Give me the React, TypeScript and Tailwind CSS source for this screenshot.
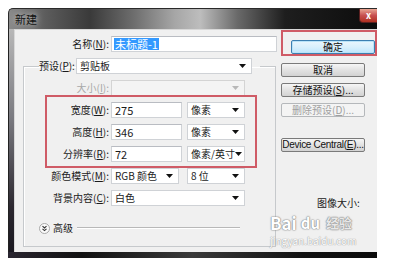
import React from 'react';

const font = "font-['Noto_Sans_CJK_SC','Noto_Sans',sans-serif]";

function Arrow({ disabled = false }: { disabled?: boolean }) {
  return (
    <svg width="7" height="4" viewBox="0 0 7 4" className="shrink-0">
      <path d="M0 0h7L3.5 4z" fill={disabled ? '#b8b8b8' : '#111'} />
    </svg>
  );
}

function Select({ value, w, disabled = false }: { value: string; w: string; disabled?: boolean }) {
  return (
    <div
      className={`${w} h-[16px] flex items-center justify-between pl-[3px] pr-[5px] border ${
        disabled ? 'bg-[#f4f4f4] border-[#d4d4d4] text-[#9a9a9a]' : 'bg-white border-[#cfd2d6] text-[#1a1a1a]'
      }`}
    >
      <span className="leading-none">{value}</span>
      <Arrow disabled={disabled} />
    </div>
  );
}

function Input({ value, w }: { value: string; w: string }) {
  return (
    <div className={`${w} h-[16px] flex items-center pl-[3px] bg-white border border-[#cfd2d6] border-t-[#b9bcc2]`}>
      <span className="leading-none text-[11px] text-[#1a1a1a]">{value}</span>
    </div>
  );
}

function Row({ label, labelW, children, disabled = false }: { label: React.ReactNode; labelW: string; children: React.ReactNode; disabled?: boolean }) {
  return (
    <div className="flex items-center h-[16px]">
      <div className={`${labelW} text-right pr-[2px] leading-none ${disabled ? 'text-[#a8a8a8]' : 'text-[#1a1a1a]'}`}>{label}</div>
      {children}
    </div>
  );
}

function Btn({ children, def = false, disabled = false, mt }: { children: React.ReactNode; def?: boolean; disabled?: boolean; mt?: string }) {
  let cls = 'border-[#7a7a7a] bg-[linear-gradient(#f6f6f6,#e2e2e2_50%,#d2d2d2)] text-[#111]';
  if (def) cls = 'border-[#3c7fb1] bg-[linear-gradient(#eaf6fd,#d9f0fc_50%,#bee6fd)] text-[#111] shadow-[inset_0_0_0_1px_#b9e3f8]';
  if (disabled) cls = 'border-[#b5b8bb] bg-[#f4f4f4] text-[#a0a0a0]';
  return (
    <div className={`${mt ?? ''} w-[84px] h-[14px] flex items-center justify-center rounded-[2px] border leading-none ${cls}`}>
      {children}
    </div>
  );
}

const U = ({ c }: { c: string }) => <span className="underline underline-offset-1">{c}</span>;

export default function App() {
  return (
    <div className={`w-[403px] h-[275px] bg-white overflow-hidden text-[10px] whitespace-nowrap ${font}`}>
      <div className="ml-[8px] mt-[8px] w-[369px] h-[250px] flex flex-col">
        {/* title bar */}
        <div className="h-[21px] flex items-center justify-between bg-[linear-gradient(90deg,#8a8a8a_0%,#5c5c5c_10%,#3a3a3a_22%,#6e6e6e_34%,#a6a6a6_45%,#bdbdbd_52%,#6a6a6a_62%,#1e1e1e_75%,#0c0c0c_100%)] rounded-tl-[5px] border-t border-l border-[#2a2a2a]">
          <span className="ml-[6px] text-[11px] text-[#111] [text-shadow:0_0_6px_#ddd]">新建</span>
          <div className="self-start w-[18px] h-[14px] rounded-bl-[4px] bg-[linear-gradient(#e8a592,#c75050_50%,#b03020)] border border-[#5a2020] border-t-0 border-r-0 flex items-center justify-center text-white text-[9px] font-bold leading-none">
            x
          </div>
        </div>

        <div className="flex flex-1">
          {/* left frame */}
          <div className="w-[7px] bg-[linear-gradient(#b8b8b8,#7a7a80_40%,#2c2830_80%,#1a1820)] border-l border-[#222]" />

          {/* client */}
          <div className="relative flex-1 bg-[#f0f0f0] flex border-l border-t border-[#d8d8d8]">
            {/* left column */}
            <div className="w-[266px] flex flex-col">
              <div className="mt-[6px]">
                <Row label={<>名称(<U c="N" />):</>} labelW="w-[96px]">
                  <div className="w-[166px] h-[16px] flex items-center pl-[2px] bg-white border border-[#cfd2d6] border-t-[#b9bcc2]">
                    <span className="bg-[#3399ff] text-white px-[1px] leading-[12px] text-[11px]">未标题-1</span>
                  </div>
                </Row>
              </div>

              <fieldset className="mt-[6px] ml-[8px] w-[253px] h-[189px] border border-[#c6c9cc] shadow-[inset_1px_1px_0_#fff]">
                <legend className="ml-[15px] pr-[8px]">
                  <div className="flex items-center">
                    <span className="pr-[1px] leading-none text-[#1a1a1a]">预设(<U c="P" />):</span>
                    <Select value="剪贴板" w="w-[176px]" />
                  </div>
                </legend>

                <div className="mt-[6px] flex flex-col">
                  <Row label={<>大小(<U c="I" />):</>} labelW="w-[87px]" disabled>
                    <Select value="" w="w-[134px]" disabled />
                  </Row>

                  <div className="-mt-[1px] ml-[21px] w-[212px] border-2 border-[#cf5b66] pt-[5px] pb-[4px] flex flex-col gap-[6px]">
                    <Row label={<>宽度(<U c="W" />):</>} labelW="w-[64px]">
                      <Input value="275" w="w-[71px]" />
                      <div className="w-[5px]" />
                      <Select value="像素" w="w-[58px]" />
                    </Row>
                    <Row label={<>高度(<U c="H" />):</>} labelW="w-[64px]">
                      <Input value="346" w="w-[71px]" />
                      <div className="w-[5px]" />
                      <Select value="像素" w="w-[58px]" />
                    </Row>
                    <Row label={<>分辨率(<U c="R" />):</>} labelW="w-[64px]">
                      <Input value="72" w="w-[71px]" />
                      <div className="w-[5px]" />
                      <Select value="像素/英寸" w="w-[58px]" />
                    </Row>
                  </div>

                  <Row label={<>颜色模式(<U c="M" />):</>} labelW="w-[87px]">
                    <Select value="RGB 颜色" w="w-[68px]" />
                    <div className="w-[8px]" />
                    <Select value="8 位" w="w-[58px]" />
                  </Row>
                  <div className="mt-[6px]">
                    <Row label={<>背景内容(<U c="C" />):</>} labelW="w-[87px]">
                      <Select value="白色" w="w-[134px]" />
                    </Row>
                  </div>

                  <div className="mt-[15px] ml-[15px] h-[14px] flex items-center">
                    <svg width="11" height="11" viewBox="0 0 11 11">
                      <circle cx="5.5" cy="5.5" r="5" fill="#fafafa" stroke="#a8a8a8" />
                      <path d="M3.5 3.2 5.5 5 7.5 3.2M3.5 5.8 5.5 7.6 7.5 5.8" fill="none" stroke="#333" strokeWidth="1.1" />
                    </svg>
                    <span className="ml-[3px] leading-none text-[#1a1a1a]">高级</span>
                    <div className="ml-[4px] w-[163px] h-[2px] border-t border-[#b8b8b8] border-b-white border-b" />
                  </div>
                </div>
              </fieldset>
            </div>

            {/* right column */}
            <div className="w-[96px] flex flex-col">
              <div className="w-[96px] h-[26px] border-2 border-[#cf5b66] pl-[8px] pt-[8px]">
                <Btn def>确定</Btn>
              </div>
              <Btn mt="mt-[7px]">取消</Btn>
              <Btn mt="mt-[6px]">存储预设(<U c="S" />)...</Btn>
              <Btn mt="mt-[6px]" disabled>删除预设(<U c="D" />)...</Btn>
              <Btn mt="mt-[21px]">
                <span className="font-['Liberation_Sans',sans-serif] tracking-[-0.3px]">Device Central(<U c="E" />)...</span>
              </Btn>
              <div className="mt-[46px] ml-[36px] leading-none text-[#1a1a1a]">图像大小:</div>
            </div>

            {/* watermark overlay */}
            <div className="absolute left-[255px] top-[184px] flex flex-col items-start pointer-events-none">
              <div className="flex items-end text-[17px] font-bold leading-[17px] text-white [text-shadow:0_0_1px_#888,0_0_1px_#888,0_0_2px_#999]">
                <span>Bai</span>
                <span className="ml-[4px] text-[15px]">du</span>
                <span className="ml-[6px] text-[13px] text-[#e8e8e8]">经验</span>
              </div>
              <span className="mt-[5px] text-[10px] leading-[10px] text-white [text-shadow:0_0_1px_#999,0_0_1px_#999]">jingyan.baidu.com</span>
            </div>
          </div>
        </div>

        {/* bottom frame */}
        <div className="h-[6px] bg-[linear-gradient(90deg,#2a2630,#111_20%,#3a3a3a_50%,#111_80%,#0a0a0a)]" />
      </div>
    </div>
  );
}
